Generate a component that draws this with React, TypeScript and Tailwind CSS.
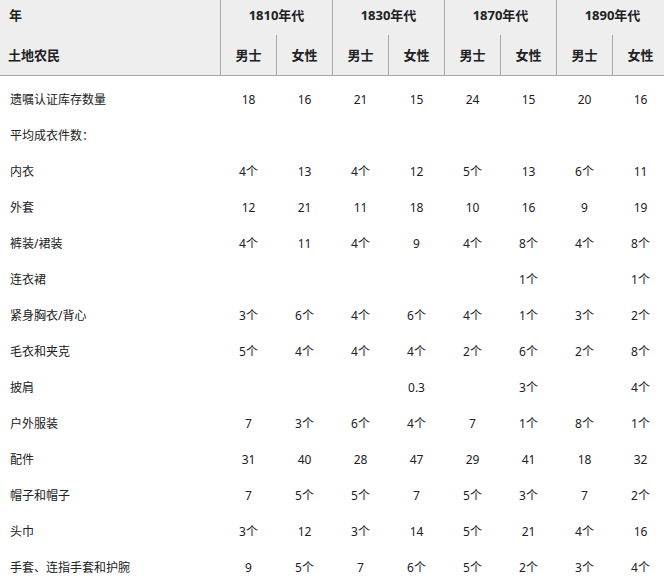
import React from "react";

const groups = ["1810年代", "1830年代", "1870年代", "1890年代"];

const rows: [string, string[]][] = [
  ["遗嘱认证库存数量", ["18", "16", "21", "15", "24", "15", "20", "16"]],
  ["平均成衣件数：", ["", "", "", "", "", "", "", ""]],
  ["内衣", ["4个", "13", "4个", "12", "5个", "13", "6个", "11"]],
  ["外套", ["12", "21", "11", "18", "10", "16", "9", "19"]],
  ["裤装/裙装", ["4个", "11", "4个", "9", "4个", "8个", "4个", "8个"]],
  ["连衣裙", ["", "", "", "", "", "1个", "", "1个"]],
  ["紧身胸衣/背心", ["3个", "6个", "4个", "6个", "4个", "1个", "3个", "2个"]],
  ["毛衣和夹克", ["5个", "4个", "4个", "4个", "2个", "6个", "2个", "8个"]],
  ["披肩", ["", "", "", "0.3", "", "3个", "", "4个"]],
  ["户外服装", ["7", "3个", "6个", "4个", "7", "1个", "8个", "1个"]],
  ["配件", ["31", "40", "28", "47", "29", "41", "18", "32"]],
  ["帽子和帽子", ["7", "5个", "5个", "7", "5个", "3个", "7", "2个"]],
  ["头巾", ["3个", "12", "3个", "14", "5个", "21", "4个", "16"]],
  ["手套、连指手套和护腕", ["9", "5个", "7", "6个", "5个", "2个", "3个", "4个"]],
];

const font = { fontFamily: '"Noto Sans", "Noto Sans CJK SC", sans-serif' };

export default function App() {
  return (
    <div className="w-[664px] h-[587px] overflow-hidden bg-white text-[#202122]" style={font}>
      <div className="w-[668px]">
        {/* header */}
        <div className="grid grid-cols-[220px_repeat(8,56px)] grid-rows-[35px_40px] bg-[#eeeeee] border-b border-[#a8a8a8] text-[13px] font-bold leading-none">
          <div className="flex items-center pl-[9px] pb-[4px]">年</div>
          {groups.map((g) => (
            <div key={g} className="col-span-2 flex items-center justify-center border-l border-[#a8a8a8] pb-[4px]">
              {g}
            </div>
          ))}
          <div className="flex items-center pl-[8px] pt-[1px]">土地农民</div>
          {groups.map((g) => (
            <React.Fragment key={g + "s"}>
              <div className="flex items-center justify-center border-l border-[#a8a8a8] pt-[1px]">男士</div>
              <div className="flex items-center justify-center border-l border-[#a8a8a8] pt-[1px]">女性</div>
            </React.Fragment>
          ))}
        </div>
        {/* body */}
        <div className="pt-[5px] text-[12px] leading-none">
          {rows.map(([label, vals]) => (
            <div key={label} className="grid grid-cols-[220px_repeat(8,56px)] h-[36px]">
              <div className="flex items-center pl-[10px] pt-[2px]">{label}</div>
              {vals.map((v, i) => (
                <div key={i} className="flex items-center justify-center pl-[1px] pt-[2px]">
                  {v}
                </div>
              ))}
            </div>
          ))}
        </div>
      </div>
    </div>
  );
}
